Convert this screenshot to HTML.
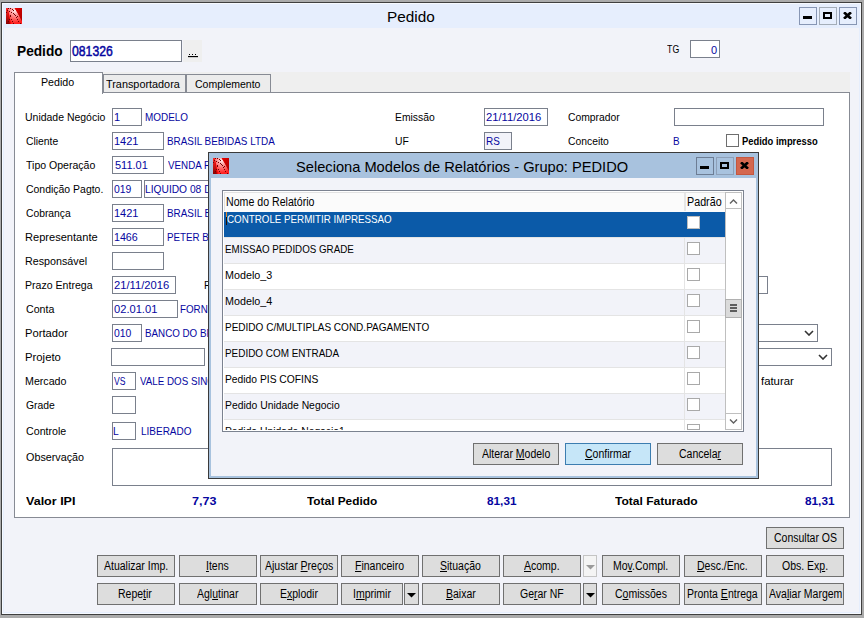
<!DOCTYPE html>
<html><head><meta charset="utf-8"><title>Pedido</title>
<style>
html,body{margin:0;padding:0;width:864px;height:618px;overflow:hidden;background:#ababab;position:relative}
u{text-decoration:underline;text-underline-offset:1px}
</style></head><body>
<div style="position:absolute;left:1px;top:2px;width:861px;height:613px;background:#e6eefd;box-shadow:inset 0 0 0 1px #3f3f3f;"></div>
<div style="position:absolute;left:2px;top:3px;width:859px;height:611px;background:transparent;box-shadow:inset 0 0 0 1px #f7faff;"></div>
<div style="position:absolute;left:4px;top:28px;width:855px;height:584px;background:#f2f3f9;"></div>
<svg style="position:absolute;left:6px;top:8px" width="16" height="16" viewBox="0 0 16 16">
<defs><radialGradient id="r6" cx="0.5" cy="0.15" r="0.8"><stop offset="0" stop-color="#fff0f0"/><stop offset="0.35" stop-color="#ff9a9a"/><stop offset="1" stop-color="#ff2020"/></radialGradient>
<linearGradient id="h6" x1="0" y1="0" x2="1" y2="1"><stop offset="0" stop-color="#e80000"/><stop offset="1" stop-color="#a80000"/></linearGradient>
<linearGradient id="l6" x1="0" y1="0" x2="0" y2="1"><stop offset="0" stop-color="#ff2a2a"/><stop offset="1" stop-color="#8a0000"/></linearGradient></defs>
<rect width="16" height="16" fill="#f00000"/>
<path d="M1.5 0H8.5C10.5 3 13 7 16 12.5V16H5C4 10 3 5 1.5 0Z" fill="url(#r6)"/>
<path d="M8.8 0H16V13.2C13.5 8.5 11 4 8.8 0Z" fill="url(#h6)"/>
<path d="M0 0H1.2C2.2 6 3 11 3.8 16H0Z" fill="url(#l6)"/>
<g fill="#700000" shape-rendering="crispEdges"><rect x="4" y="0" width="1" height="1"/><rect x="6" y="1" width="1" height="1"/><rect x="7" y="2" width="1" height="1"/><rect x="7" y="5" width="1" height="1"/><rect x="8" y="6" width="1" height="1"/><rect x="9" y="7" width="1" height="1"/><rect x="11" y="8" width="1" height="1"/><rect x="10" y="9" width="1" height="1"/><rect x="11" y="11" width="1" height="1"/><rect x="12" y="13" width="1" height="1"/><rect x="2" y="0" width="1" height="1"/><rect x="3" y="3" width="1" height="1"/><rect x="5" y="4" width="1" height="1"/><rect x="4" y="7" width="1" height="1"/><rect x="4" y="8" width="1" height="1"/><rect x="5" y="11" width="1" height="1"/><rect x="6" y="13" width="1" height="1"/><rect x="7" y="15" width="1" height="1"/><rect x="1" y="2" width="1" height="1"/><rect x="0" y="4" width="1" height="1"/><rect x="3" y="11" width="1" height="1"/><rect x="2" y="13" width="1" height="1"/><rect x="14" y="15" width="1" height="1"/></g>
</svg>
<div style="position:absolute;left:387.0px;top:9px;font-family:'Liberation Sans', sans-serif;font-size:15px;line-height:15px;font-weight:normal;color:#000;white-space:nowrap;transform-origin:0 0;transform:scaleX(1.0222);">Pedido</div>
<div style="position:absolute;left:799px;top:7px;width:18px;height:18px;background:#e6eefd;box-shadow:inset 0 0 0 1px #8796b4;"></div>
<div style="position:absolute;left:803px;top:16px;width:9px;height:3px;background:#000;"></div>
<div style="position:absolute;left:819px;top:7px;width:18px;height:18px;background:#e6eefd;box-shadow:inset 0 0 0 1px #a4adb8;"></div>
<div style="position:absolute;left:823px;top:12px;width:9px;height:7px;background:transparent;border:2px solid #000;box-sizing:border-box;"></div>
<div style="position:absolute;left:839px;top:7px;width:18px;height:18px;background:#e6eefd;box-shadow:inset 0 0 0 1px #8796b4;"></div>
<svg style="position:absolute;left:843px;top:12px" width="9" height="7" viewBox="0 0 9 7"><path d="M1 0.3L8 6.7M8 0.3L1 6.7" stroke="#000" stroke-width="2.7"/></svg>
<div style="position:absolute;left:17.0px;top:44px;font-family:'Liberation Sans', sans-serif;font-size:14px;line-height:14px;font-weight:bold;color:#000;white-space:nowrap;transform-origin:0 0;transform:scaleX(0.9778);">Pedido</div>
<div style="position:absolute;left:70px;top:40px;width:112px;height:22px;background:#fff;box-shadow:inset 0 0 0 1px #7a808c;"></div>
<div style="position:absolute;left:72.0px;top:44px;font-family:'Liberation Sans', sans-serif;font-size:14px;line-height:14px;font-weight:normal;color:#0606a0;white-space:nowrap;transform-origin:0 0;transform:scaleX(0.8723);-webkit-text-stroke:0.5px #0606a0;">081326</div>
<div style="position:absolute;left:183px;top:40px;width:19px;height:22px;background:#efefef;"></div>
<div style="position:absolute;left:189px;top:54px;width:1px;height:1px;background:#000;"></div>
<div style="position:absolute;left:192px;top:54px;width:1px;height:1px;background:#000;"></div>
<div style="position:absolute;left:195px;top:54px;width:1px;height:1px;background:#000;"></div>
<div style="position:absolute;left:188px;top:56px;width:10px;height:1px;background:#000;"></div>
<div style="position:absolute;left:188px;top:57px;width:10px;height:1px;background:#c8c8c8;"></div>
<div style="position:absolute;left:667.0px;top:44px;font-family:'Liberation Sans', sans-serif;font-size:11px;line-height:11px;font-weight:normal;color:#000;white-space:nowrap;transform-origin:0 0;transform:scaleX(0.8000);">TG</div>
<div style="position:absolute;left:690px;top:40px;width:30px;height:18px;background:#fff;box-shadow:inset 0 0 0 1px #7a808c;"></div>
<div style="position:absolute;left:711.0px;top:45px;font-family:'Liberation Sans', sans-serif;font-size:11px;line-height:11px;font-weight:normal;color:#0606a0;white-space:nowrap;transform-origin:0 0;transform:scaleX(1.0000);">0</div>
<div style="position:absolute;left:14px;top:72px;width:836px;height:21px;background:#efefef;"></div>
<div style="position:absolute;left:14px;top:92px;width:836px;height:426px;background:#fff;box-shadow:inset 0 0 0 1px #878b94;"></div>
<div style="position:absolute;left:15px;top:93px;width:834px;height:424px;background:#fff;"></div>
<div style="position:absolute;left:103px;top:74px;width:83px;height:19px;background:#ececec;box-shadow:inset 0 0 0 1px #878b94;"></div>
<div style="position:absolute;left:106.0px;top:79px;font-family:'Liberation Sans', sans-serif;font-size:11px;line-height:11px;font-weight:normal;color:#000;white-space:nowrap;transform-origin:0 0;transform:scaleX(0.9867);">Transportadora</div>
<div style="position:absolute;left:186px;top:74px;width:85px;height:19px;background:#ececec;box-shadow:inset 0 0 0 1px #878b94;"></div>
<div style="position:absolute;left:195.0px;top:79px;font-family:'Liberation Sans', sans-serif;font-size:11px;line-height:11px;font-weight:normal;color:#000;white-space:nowrap;transform-origin:0 0;transform:scaleX(0.9559);">Complemento</div>
<div style="position:absolute;left:14px;top:72px;width:89px;height:22px;background:#fff;box-shadow:inset 0 0 0 1px #878b94;"></div>
<div style="position:absolute;left:15px;top:73px;width:87px;height:22px;background:#fff;"></div>
<div style="position:absolute;left:40.5px;top:77px;font-family:'Liberation Sans', sans-serif;font-size:11px;line-height:11px;font-weight:normal;color:#000;white-space:nowrap;transform-origin:0 0;transform:scaleX(0.9697);">Pedido</div>
<div style="position:absolute;left:25.0px;top:112px;font-family:'Liberation Sans', sans-serif;font-size:11px;line-height:11px;font-weight:normal;color:#000;white-space:nowrap;transform-origin:0 0;transform:scaleX(0.9518);">Unidade Negócio</div>
<div style="position:absolute;left:112px;top:108px;width:30px;height:18px;background:#fff;box-shadow:inset 0 0 0 1px #7a808c;"></div>
<div style="position:absolute;left:114.0px;top:112px;font-family:'Liberation Sans', sans-serif;font-size:11px;line-height:11px;font-weight:normal;color:#0606a0;white-space:nowrap;transform-origin:0 0;transform:scaleX(1.0000);">1</div>
<div style="position:absolute;left:145.0px;top:112px;font-family:'Liberation Sans', sans-serif;font-size:11px;line-height:11px;font-weight:normal;color:#0606a0;white-space:nowrap;transform-origin:0 0;transform:scaleX(0.9022);">MODELO</div>
<div style="position:absolute;left:26.0px;top:136px;font-family:'Liberation Sans', sans-serif;font-size:11px;line-height:11px;font-weight:normal;color:#000;white-space:nowrap;transform-origin:0 0;transform:scaleX(0.9412);">Cliente</div>
<div style="position:absolute;left:112px;top:132px;width:52px;height:18px;background:#fff;box-shadow:inset 0 0 0 1px #7a808c;"></div>
<div style="position:absolute;left:114.0px;top:136px;font-family:'Liberation Sans', sans-serif;font-size:11px;line-height:11px;font-weight:normal;color:#0606a0;white-space:nowrap;transform-origin:0 0;transform:scaleX(1.0000);">1421</div>
<div style="position:absolute;left:167.0px;top:136px;font-family:'Liberation Sans', sans-serif;font-size:11px;line-height:11px;font-weight:normal;color:#0606a0;white-space:nowrap;transform-origin:0 0;transform:scaleX(0.8992);">BRASIL BEBIDAS LTDA</div>
<div style="position:absolute;left:26.0px;top:160px;font-family:'Liberation Sans', sans-serif;font-size:11px;line-height:11px;font-weight:normal;color:#000;white-space:nowrap;transform-origin:0 0;transform:scaleX(0.9583);">Tipo Operação</div>
<div style="position:absolute;left:112px;top:156px;width:52px;height:18px;background:#fff;box-shadow:inset 0 0 0 1px #7a808c;"></div>
<div style="position:absolute;left:115.0px;top:160px;font-family:'Liberation Sans', sans-serif;font-size:11px;line-height:11px;font-weight:normal;color:#0606a0;white-space:nowrap;transform-origin:0 0;transform:scaleX(1.0000);">511.01</div>
<div style="position:absolute;left:168.0px;top:160px;font-family:'Liberation Sans', sans-serif;font-size:11px;line-height:11px;font-weight:normal;color:#0606a0;white-space:nowrap;transform-origin:0 0;transform:scaleX(0.8900);">VENDA FORA DO ESTADO</div>
<div style="position:absolute;left:26.0px;top:184px;font-family:'Liberation Sans', sans-serif;font-size:11px;line-height:11px;font-weight:normal;color:#000;white-space:nowrap;transform-origin:0 0;transform:scaleX(0.9506);">Condição Pagto.</div>
<div style="position:absolute;left:112px;top:180px;width:30px;height:18px;background:#fff;box-shadow:inset 0 0 0 1px #7a808c;"></div>
<div style="position:absolute;left:114.0px;top:184px;font-family:'Liberation Sans', sans-serif;font-size:11px;line-height:11px;font-weight:normal;color:#0606a0;white-space:nowrap;transform-origin:0 0;transform:scaleX(0.9444);">019</div>
<div style="position:absolute;left:144px;top:180px;width:120px;height:18px;background:#fff;box-shadow:inset 0 0 0 1px #7a808c;"></div>
<div style="position:absolute;left:145.0px;top:184px;font-family:'Liberation Sans', sans-serif;font-size:11px;line-height:11px;font-weight:normal;color:#0606a0;white-space:nowrap;transform-origin:0 0;transform:scaleX(0.9300);">LIQUIDO 08 DIAS</div>
<div style="position:absolute;left:26.0px;top:208px;font-family:'Liberation Sans', sans-serif;font-size:11px;line-height:11px;font-weight:normal;color:#000;white-space:nowrap;transform-origin:0 0;transform:scaleX(0.9375);">Cobrança</div>
<div style="position:absolute;left:112px;top:204px;width:52px;height:18px;background:#fff;box-shadow:inset 0 0 0 1px #7a808c;"></div>
<div style="position:absolute;left:114.0px;top:208px;font-family:'Liberation Sans', sans-serif;font-size:11px;line-height:11px;font-weight:normal;color:#0606a0;white-space:nowrap;transform-origin:0 0;transform:scaleX(1.0000);">1421</div>
<div style="position:absolute;left:167.0px;top:208px;font-family:'Liberation Sans', sans-serif;font-size:11px;line-height:11px;font-weight:normal;color:#0606a0;white-space:nowrap;transform-origin:0 0;transform:scaleX(0.8992);">BRASIL BEBIDAS LTDA</div>
<div style="position:absolute;left:25.0px;top:232px;font-family:'Liberation Sans', sans-serif;font-size:11px;line-height:11px;font-weight:normal;color:#000;white-space:nowrap;transform-origin:0 0;transform:scaleX(1.0070);">Representante</div>
<div style="position:absolute;left:112px;top:228px;width:52px;height:18px;background:#fff;box-shadow:inset 0 0 0 1px #7a808c;"></div>
<div style="position:absolute;left:114.0px;top:232px;font-family:'Liberation Sans', sans-serif;font-size:11px;line-height:11px;font-weight:normal;color:#0606a0;white-space:nowrap;transform-origin:0 0;transform:scaleX(0.9696);">1466</div>
<div style="position:absolute;left:167.0px;top:232px;font-family:'Liberation Sans', sans-serif;font-size:11px;line-height:11px;font-weight:normal;color:#0606a0;white-space:nowrap;transform-origin:0 0;transform:scaleX(0.8900);">PETER BRASIL</div>
<div style="position:absolute;left:25.0px;top:256px;font-family:'Liberation Sans', sans-serif;font-size:11px;line-height:11px;font-weight:normal;color:#000;white-space:nowrap;transform-origin:0 0;transform:scaleX(0.9758);">Responsável</div>
<div style="position:absolute;left:112px;top:252px;width:52px;height:18px;background:#fff;box-shadow:inset 0 0 0 1px #7a808c;"></div>
<div style="position:absolute;left:25.0px;top:280px;font-family:'Liberation Sans', sans-serif;font-size:11px;line-height:11px;font-weight:normal;color:#000;white-space:nowrap;transform-origin:0 0;transform:scaleX(0.9614);">Prazo Entrega</div>
<div style="position:absolute;left:112px;top:276px;width:64px;height:18px;background:#fff;box-shadow:inset 0 0 0 1px #7a808c;"></div>
<div style="position:absolute;left:114.0px;top:280px;font-family:'Liberation Sans', sans-serif;font-size:11px;line-height:11px;font-weight:normal;color:#0606a0;white-space:nowrap;transform-origin:0 0;transform:scaleX(1.0185);">21/11/2016</div>
<div style="position:absolute;left:26.0px;top:304px;font-family:'Liberation Sans', sans-serif;font-size:11px;line-height:11px;font-weight:normal;color:#000;white-space:nowrap;transform-origin:0 0;transform:scaleX(0.9667);">Conta</div>
<div style="position:absolute;left:112px;top:300px;width:66px;height:18px;background:#fff;box-shadow:inset 0 0 0 1px #7a808c;"></div>
<div style="position:absolute;left:114.0px;top:304px;font-family:'Liberation Sans', sans-serif;font-size:11px;line-height:11px;font-weight:normal;color:#0606a0;white-space:nowrap;transform-origin:0 0;transform:scaleX(1.0116);">02.01.01</div>
<div style="position:absolute;left:180.0px;top:304px;font-family:'Liberation Sans', sans-serif;font-size:11px;line-height:11px;font-weight:normal;color:#0606a0;white-space:nowrap;transform-origin:0 0;transform:scaleX(0.8900);">FORNECEDORES</div>
<div style="position:absolute;left:25.0px;top:328px;font-family:'Liberation Sans', sans-serif;font-size:11px;line-height:11px;font-weight:normal;color:#000;white-space:nowrap;transform-origin:0 0;transform:scaleX(1.0195);">Portador</div>
<div style="position:absolute;left:112px;top:324px;width:30px;height:18px;background:#fff;box-shadow:inset 0 0 0 1px #7a808c;"></div>
<div style="position:absolute;left:114.0px;top:328px;font-family:'Liberation Sans', sans-serif;font-size:11px;line-height:11px;font-weight:normal;color:#0606a0;white-space:nowrap;transform-origin:0 0;transform:scaleX(0.9444);">010</div>
<div style="position:absolute;left:145.0px;top:328px;font-family:'Liberation Sans', sans-serif;font-size:11px;line-height:11px;font-weight:normal;color:#0606a0;white-space:nowrap;transform-origin:0 0;transform:scaleX(0.8900);">BANCO DO BRASIL</div>
<div style="position:absolute;left:25.0px;top:352px;font-family:'Liberation Sans', sans-serif;font-size:11px;line-height:11px;font-weight:normal;color:#000;white-space:nowrap;transform-origin:0 0;transform:scaleX(1.0294);">Projeto</div>
<div style="position:absolute;left:111px;top:348px;width:94px;height:18px;background:#fff;box-shadow:inset 0 0 0 1px #7a808c;"></div>
<div style="position:absolute;left:25.0px;top:376px;font-family:'Liberation Sans', sans-serif;font-size:11px;line-height:11px;font-weight:normal;color:#000;white-space:nowrap;transform-origin:0 0;transform:scaleX(0.9690);">Mercado</div>
<div style="position:absolute;left:112px;top:372px;width:24px;height:18px;background:#fff;box-shadow:inset 0 0 0 1px #7a808c;"></div>
<div style="position:absolute;left:114.0px;top:376px;font-family:'Liberation Sans', sans-serif;font-size:11px;line-height:11px;font-weight:normal;color:#0606a0;white-space:nowrap;transform-origin:0 0;transform:scaleX(0.7857);">VS</div>
<div style="position:absolute;left:140.0px;top:376px;font-family:'Liberation Sans', sans-serif;font-size:11px;line-height:11px;font-weight:normal;color:#0606a0;white-space:nowrap;transform-origin:0 0;transform:scaleX(0.8900);">VALE DOS SINOS</div>
<div style="position:absolute;left:26.0px;top:400px;font-family:'Liberation Sans', sans-serif;font-size:11px;line-height:11px;font-weight:normal;color:#000;white-space:nowrap;transform-origin:0 0;transform:scaleX(0.9419);">Grade</div>
<div style="position:absolute;left:112px;top:396px;width:24px;height:18px;background:#fff;box-shadow:inset 0 0 0 1px #7a808c;"></div>
<div style="position:absolute;left:26.0px;top:426px;font-family:'Liberation Sans', sans-serif;font-size:11px;line-height:11px;font-weight:normal;color:#000;white-space:nowrap;transform-origin:0 0;transform:scaleX(0.9690);">Controle</div>
<div style="position:absolute;left:112px;top:422px;width:24px;height:18px;background:#fff;box-shadow:inset 0 0 0 1px #7a808c;"></div>
<div style="position:absolute;left:113.0px;top:426px;font-family:'Liberation Sans', sans-serif;font-size:11px;line-height:11px;font-weight:normal;color:#0606a0;white-space:nowrap;transform-origin:0 0;transform:scaleX(0.9300);">L</div>
<div style="position:absolute;left:140.5px;top:426px;font-family:'Liberation Sans', sans-serif;font-size:11px;line-height:11px;font-weight:normal;color:#0606a0;white-space:nowrap;transform-origin:0 0;transform:scaleX(0.9074);">LIBERADO</div>
<div style="position:absolute;left:204.0px;top:280px;font-family:'Liberation Sans', sans-serif;font-size:11px;line-height:11px;font-weight:normal;color:#000;white-space:nowrap;transform-origin:0 0;transform:scaleX(0.9400);">Previsão</div>
<div style="position:absolute;left:395.0px;top:112px;font-family:'Liberation Sans', sans-serif;font-size:11px;line-height:11px;font-weight:normal;color:#000;white-space:nowrap;transform-origin:0 0;transform:scaleX(0.9400);">Emissão</div>
<div style="position:absolute;left:484px;top:108px;width:64px;height:18px;background:#fff;box-shadow:inset 0 0 0 1px #7a808c;"></div>
<div style="position:absolute;left:486.0px;top:112px;font-family:'Liberation Sans', sans-serif;font-size:11px;line-height:11px;font-weight:normal;color:#0606a0;white-space:nowrap;transform-origin:0 0;transform:scaleX(1.0185);">21/11/2016</div>
<div style="position:absolute;left:395.0px;top:136px;font-family:'Liberation Sans', sans-serif;font-size:11px;line-height:11px;font-weight:normal;color:#000;white-space:nowrap;transform-origin:0 0;transform:scaleX(0.9400);">UF</div>
<div style="position:absolute;left:484px;top:132px;width:28px;height:18px;background:#f2f3f9;box-shadow:inset 0 0 0 1px #7a808c;"></div>
<div style="position:absolute;left:486.0px;top:136px;font-family:'Liberation Sans', sans-serif;font-size:11px;line-height:11px;font-weight:normal;color:#0606a0;white-space:nowrap;transform-origin:0 0;transform:scaleX(0.9000);">RS</div>
<div style="position:absolute;left:568.0px;top:112px;font-family:'Liberation Sans', sans-serif;font-size:11px;line-height:11px;font-weight:normal;color:#000;white-space:nowrap;transform-origin:0 0;transform:scaleX(0.9400);">Comprador</div>
<div style="position:absolute;left:674px;top:108px;width:150px;height:18px;background:#fff;box-shadow:inset 0 0 0 1px #7a808c;"></div>
<div style="position:absolute;left:568.0px;top:136px;font-family:'Liberation Sans', sans-serif;font-size:11px;line-height:11px;font-weight:normal;color:#000;white-space:nowrap;transform-origin:0 0;transform:scaleX(0.9400);">Conceito</div>
<div style="position:absolute;left:673.0px;top:136px;font-family:'Liberation Sans', sans-serif;font-size:11px;line-height:11px;font-weight:normal;color:#0606a0;white-space:nowrap;transform-origin:0 0;transform:scaleX(0.9000);">B</div>
<div style="position:absolute;left:726px;top:134px;width:13px;height:13px;background:#fff;box-shadow:inset 0 0 0 1px #6e6e6e;"></div>
<div style="position:absolute;left:742.0px;top:136px;font-family:'Liberation Sans', sans-serif;font-size:11px;line-height:11px;font-weight:bold;color:#000;white-space:nowrap;transform-origin:0 0;transform:scaleX(0.8539);">Pedido impresso</div>
<div style="position:absolute;left:700px;top:276px;width:68px;height:18px;background:#fff;box-shadow:inset 0 0 0 1px #7a808c;"></div>
<div style="position:absolute;left:700px;top:324px;width:118px;height:18px;background:#fff;box-shadow:inset 0 0 0 1px #7a808c;"></div>
<svg style="position:absolute;left:804px;top:330px" width="10" height="6"><path d="M1 1L5 5L9 1" stroke="#333" stroke-width="1.6" fill="none"/></svg>
<div style="position:absolute;left:700px;top:348px;width:132px;height:18px;background:#fff;box-shadow:inset 0 0 0 1px #7a808c;"></div>
<svg style="position:absolute;left:818px;top:354px" width="10" height="6"><path d="M1 1L5 5L9 1" stroke="#333" stroke-width="1.6" fill="none"/></svg>
<div style="position:absolute;left:761.0px;top:376px;font-family:'Liberation Sans', sans-serif;font-size:11px;line-height:11px;font-weight:normal;color:#000;white-space:nowrap;transform-origin:0 0;transform:scaleX(1.0312);">faturar</div>
<div style="position:absolute;left:26.0px;top:452px;font-family:'Liberation Sans', sans-serif;font-size:11px;line-height:11px;font-weight:normal;color:#000;white-space:nowrap;transform-origin:0 0;transform:scaleX(0.9797);">Observação</div>
<div style="position:absolute;left:112px;top:448px;width:720px;height:38px;background:#fff;box-shadow:inset 0 0 0 1px #7a808c;"></div>
<div style="position:absolute;left:26.0px;top:496px;font-family:'Liberation Sans', sans-serif;font-size:11px;line-height:11px;font-weight:bold;color:#000;white-space:nowrap;transform-origin:0 0;transform:scaleX(1.1395);">Valor IPI</div>
<div style="position:absolute;left:192.0px;top:496px;font-family:'Liberation Sans', sans-serif;font-size:11px;line-height:11px;font-weight:bold;color:#0606a0;white-space:nowrap;transform-origin:0 0;transform:scaleX(1.1429);">7,73</div>
<div style="position:absolute;left:307.0px;top:496px;font-family:'Liberation Sans', sans-serif;font-size:11px;line-height:11px;font-weight:bold;color:#000;white-space:nowrap;transform-origin:0 0;transform:scaleX(1.0769);">Total Pedido</div>
<div style="position:absolute;left:487.0px;top:496px;font-family:'Liberation Sans', sans-serif;font-size:11px;line-height:11px;font-weight:bold;color:#0606a0;white-space:nowrap;transform-origin:0 0;transform:scaleX(1.0714);">81,31</div>
<div style="position:absolute;left:615.0px;top:496px;font-family:'Liberation Sans', sans-serif;font-size:11px;line-height:11px;font-weight:bold;color:#000;white-space:nowrap;transform-origin:0 0;transform:scaleX(1.0933);">Total Faturado</div>
<div style="position:absolute;left:805.0px;top:496px;font-family:'Liberation Sans', sans-serif;font-size:11px;line-height:11px;font-weight:bold;color:#0606a0;white-space:nowrap;transform-origin:0 0;transform:scaleX(1.0714);">81,31</div>
<div style="position:absolute;left:766px;top:527px;width:78px;height:22px;background:#dddddd;box-shadow:inset 0 0 0 1px #707070;"></div>
<div style="position:absolute;left:774.0px;top:532px;font-family:'Liberation Sans', sans-serif;font-size:12px;line-height:12px;font-weight:normal;color:#000;white-space:nowrap;transform-origin:0 0;transform:scaleX(0.8750);">Consultar OS</div>
<div style="position:absolute;left:97px;top:555px;width:78px;height:22px;background:#dddddd;box-shadow:inset 0 0 0 1px #707070;"></div>
<div style="position:absolute;left:104.0px;top:560px;font-family:'Liberation Sans', sans-serif;font-size:12px;line-height:12px;font-weight:normal;color:#000;white-space:nowrap;transform-origin:0 0;transform:scaleX(0.8750);">Atualizar Imp.</div>
<div style="position:absolute;left:179px;top:555px;width:78px;height:22px;background:#dddddd;box-shadow:inset 0 0 0 1px #707070;"></div>
<div style="position:absolute;left:206.0px;top:560px;font-family:'Liberation Sans', sans-serif;font-size:12px;line-height:12px;font-weight:normal;color:#000;white-space:nowrap;transform-origin:0 0;transform:scaleX(0.8750);"><u>I</u>tens</div>
<div style="position:absolute;left:260px;top:555px;width:78px;height:22px;background:#dddddd;box-shadow:inset 0 0 0 1px #707070;"></div>
<div style="position:absolute;left:265.0px;top:560px;font-family:'Liberation Sans', sans-serif;font-size:12px;line-height:12px;font-weight:normal;color:#000;white-space:nowrap;transform-origin:0 0;transform:scaleX(0.8750);">Ajustar <u>P</u>reços</div>
<div style="position:absolute;left:341px;top:555px;width:78px;height:22px;background:#dddddd;box-shadow:inset 0 0 0 1px #707070;"></div>
<div style="position:absolute;left:355.0px;top:560px;font-family:'Liberation Sans', sans-serif;font-size:12px;line-height:12px;font-weight:normal;color:#000;white-space:nowrap;transform-origin:0 0;transform:scaleX(0.8750);"><u>F</u>inanceiro</div>
<div style="position:absolute;left:422px;top:555px;width:78px;height:22px;background:#dddddd;box-shadow:inset 0 0 0 1px #707070;"></div>
<div style="position:absolute;left:440.0px;top:560px;font-family:'Liberation Sans', sans-serif;font-size:12px;line-height:12px;font-weight:normal;color:#000;white-space:nowrap;transform-origin:0 0;transform:scaleX(0.8750);"><u>S</u>ituação</div>
<div style="position:absolute;left:503px;top:555px;width:78px;height:22px;background:#dddddd;box-shadow:inset 0 0 0 1px #707070;"></div>
<div style="position:absolute;left:524.0px;top:560px;font-family:'Liberation Sans', sans-serif;font-size:12px;line-height:12px;font-weight:normal;color:#000;white-space:nowrap;transform-origin:0 0;transform:scaleX(0.8750);"><u>A</u>comp.</div>
<div style="position:absolute;left:602px;top:555px;width:78px;height:22px;background:#dddddd;box-shadow:inset 0 0 0 1px #707070;"></div>
<div style="position:absolute;left:613.0px;top:560px;font-family:'Liberation Sans', sans-serif;font-size:12px;line-height:12px;font-weight:normal;color:#000;white-space:nowrap;transform-origin:0 0;transform:scaleX(0.8750);">Mo<u>v</u>.Compl.</div>
<div style="position:absolute;left:684px;top:555px;width:78px;height:22px;background:#dddddd;box-shadow:inset 0 0 0 1px #707070;"></div>
<div style="position:absolute;left:697.0px;top:560px;font-family:'Liberation Sans', sans-serif;font-size:12px;line-height:12px;font-weight:normal;color:#000;white-space:nowrap;transform-origin:0 0;transform:scaleX(0.8750);"><u>D</u>esc./Enc.</div>
<div style="position:absolute;left:766px;top:555px;width:78px;height:22px;background:#dddddd;box-shadow:inset 0 0 0 1px #707070;"></div>
<div style="position:absolute;left:782.0px;top:560px;font-family:'Liberation Sans', sans-serif;font-size:12px;line-height:12px;font-weight:normal;color:#000;white-space:nowrap;transform-origin:0 0;transform:scaleX(0.8750);">Obs. Ex<u>p</u>.</div>
<div style="position:absolute;left:97px;top:583px;width:78px;height:22px;background:#dddddd;box-shadow:inset 0 0 0 1px #707070;"></div>
<div style="position:absolute;left:118.0px;top:588px;font-family:'Liberation Sans', sans-serif;font-size:12px;line-height:12px;font-weight:normal;color:#000;white-space:nowrap;transform-origin:0 0;transform:scaleX(0.8750);">Repe<u>t</u>ir</div>
<div style="position:absolute;left:179px;top:583px;width:78px;height:22px;background:#dddddd;box-shadow:inset 0 0 0 1px #707070;"></div>
<div style="position:absolute;left:197.0px;top:588px;font-family:'Liberation Sans', sans-serif;font-size:12px;line-height:12px;font-weight:normal;color:#000;white-space:nowrap;transform-origin:0 0;transform:scaleX(0.8750);">Agl<u>u</u>tinar</div>
<div style="position:absolute;left:260px;top:583px;width:78px;height:22px;background:#dddddd;box-shadow:inset 0 0 0 1px #707070;"></div>
<div style="position:absolute;left:280.0px;top:588px;font-family:'Liberation Sans', sans-serif;font-size:12px;line-height:12px;font-weight:normal;color:#000;white-space:nowrap;transform-origin:0 0;transform:scaleX(0.8750);">E<u>x</u>plodir</div>
<div style="position:absolute;left:422px;top:583px;width:78px;height:22px;background:#dddddd;box-shadow:inset 0 0 0 1px #707070;"></div>
<div style="position:absolute;left:446.0px;top:588px;font-family:'Liberation Sans', sans-serif;font-size:12px;line-height:12px;font-weight:normal;color:#000;white-space:nowrap;transform-origin:0 0;transform:scaleX(0.8750);"><u>B</u>aixar</div>
<div style="position:absolute;left:602px;top:583px;width:78px;height:22px;background:#dddddd;box-shadow:inset 0 0 0 1px #707070;"></div>
<div style="position:absolute;left:615.0px;top:588px;font-family:'Liberation Sans', sans-serif;font-size:12px;line-height:12px;font-weight:normal;color:#000;white-space:nowrap;transform-origin:0 0;transform:scaleX(0.8750);">C<u>o</u>missões</div>
<div style="position:absolute;left:684px;top:583px;width:78px;height:22px;background:#dddddd;box-shadow:inset 0 0 0 1px #707070;"></div>
<div style="position:absolute;left:687.0px;top:588px;font-family:'Liberation Sans', sans-serif;font-size:12px;line-height:12px;font-weight:normal;color:#000;white-space:nowrap;transform-origin:0 0;transform:scaleX(0.8750);">Pronta <u>E</u>ntrega</div>
<div style="position:absolute;left:766px;top:583px;width:78px;height:22px;background:#dddddd;box-shadow:inset 0 0 0 1px #707070;"></div>
<div style="position:absolute;left:769.0px;top:588px;font-family:'Liberation Sans', sans-serif;font-size:12px;line-height:12px;font-weight:normal;color:#000;white-space:nowrap;transform-origin:0 0;transform:scaleX(0.8750);">Ava<u>l</u>iar Margem</div>
<div style="position:absolute;left:341px;top:583px;width:62px;height:22px;background:#dddddd;box-shadow:inset 0 0 0 1px #707070;"></div>
<div style="position:absolute;left:353.0px;top:588px;font-family:'Liberation Sans', sans-serif;font-size:12px;line-height:12px;font-weight:normal;color:#000;white-space:nowrap;transform-origin:0 0;transform:scaleX(0.8750);">I<u>m</u>primir</div>
<div style="position:absolute;left:503px;top:583px;width:78px;height:22px;background:#dddddd;box-shadow:inset 0 0 0 1px #707070;"></div>
<div style="position:absolute;left:520.0px;top:588px;font-family:'Liberation Sans', sans-serif;font-size:12px;line-height:12px;font-weight:normal;color:#000;white-space:nowrap;transform-origin:0 0;transform:scaleX(0.8750);">Ge<u>r</u>ar NF</div>
<div style="position:absolute;left:583px;top:555px;width:14px;height:22px;background:#f4f4f4;box-shadow:inset 0 0 0 1px #c4c4c4;"></div>
<svg style="position:absolute;left:586px;top:565px" width="9" height="5"><path d="M0 0H9L4.5 4.5Z" fill="#9a9a9a"/></svg>
<div style="position:absolute;left:404px;top:583px;width:15px;height:22px;background:#dddddd;box-shadow:inset 0 0 0 1px #707070;"></div>
<svg style="position:absolute;left:407px;top:593px" width="9" height="5"><path d="M0 0H9L4.5 4.5Z" fill="#000"/></svg>
<div style="position:absolute;left:583px;top:583px;width:14px;height:22px;background:#dddddd;box-shadow:inset 0 0 0 1px #707070;"></div>
<svg style="position:absolute;left:586px;top:593px" width="9" height="5"><path d="M0 0H9L4.5 4.5Z" fill="#000"/></svg>
<div style="position:absolute;left:208px;top:152px;width:551px;height:327px;background:#a8c2de;box-shadow:inset 0 0 0 1px #3a3a3a;"></div>
<div style="position:absolute;left:211px;top:178px;width:545px;height:298px;background:#f2f3f9;"></div>
<svg style="position:absolute;left:213px;top:158px" width="16" height="16" viewBox="0 0 16 16">
<defs><radialGradient id="r213" cx="0.5" cy="0.15" r="0.8"><stop offset="0" stop-color="#fff0f0"/><stop offset="0.35" stop-color="#ff9a9a"/><stop offset="1" stop-color="#ff2020"/></radialGradient>
<linearGradient id="h213" x1="0" y1="0" x2="1" y2="1"><stop offset="0" stop-color="#e80000"/><stop offset="1" stop-color="#a80000"/></linearGradient>
<linearGradient id="l213" x1="0" y1="0" x2="0" y2="1"><stop offset="0" stop-color="#ff2a2a"/><stop offset="1" stop-color="#8a0000"/></linearGradient></defs>
<rect width="16" height="16" fill="#f00000"/>
<path d="M1.5 0H8.5C10.5 3 13 7 16 12.5V16H5C4 10 3 5 1.5 0Z" fill="url(#r213)"/>
<path d="M8.8 0H16V13.2C13.5 8.5 11 4 8.8 0Z" fill="url(#h213)"/>
<path d="M0 0H1.2C2.2 6 3 11 3.8 16H0Z" fill="url(#l213)"/>
<g fill="#700000" shape-rendering="crispEdges"><rect x="4" y="0" width="1" height="1"/><rect x="6" y="1" width="1" height="1"/><rect x="7" y="2" width="1" height="1"/><rect x="7" y="5" width="1" height="1"/><rect x="8" y="6" width="1" height="1"/><rect x="9" y="7" width="1" height="1"/><rect x="11" y="8" width="1" height="1"/><rect x="10" y="9" width="1" height="1"/><rect x="11" y="11" width="1" height="1"/><rect x="12" y="13" width="1" height="1"/><rect x="2" y="0" width="1" height="1"/><rect x="3" y="3" width="1" height="1"/><rect x="5" y="4" width="1" height="1"/><rect x="4" y="7" width="1" height="1"/><rect x="4" y="8" width="1" height="1"/><rect x="5" y="11" width="1" height="1"/><rect x="6" y="13" width="1" height="1"/><rect x="7" y="15" width="1" height="1"/><rect x="1" y="2" width="1" height="1"/><rect x="0" y="4" width="1" height="1"/><rect x="3" y="11" width="1" height="1"/><rect x="2" y="13" width="1" height="1"/><rect x="14" y="15" width="1" height="1"/></g>
</svg>
<div style="position:absolute;left:296.0px;top:159px;font-family:'Liberation Sans', sans-serif;font-size:15px;line-height:15px;font-weight:normal;color:#000;white-space:nowrap;transform-origin:0 0;transform:scaleX(0.9764);">Seleciona Modelos de Relatórios - Grupo: PEDIDO</div>
<div style="position:absolute;left:696px;top:157px;width:18px;height:18px;background:#a8c2de;box-shadow:inset 0 0 0 1px #6d7d94;"></div>
<div style="position:absolute;left:700px;top:166px;width:9px;height:3px;background:#000;"></div>
<div style="position:absolute;left:716px;top:157px;width:18px;height:18px;background:#a8c2de;box-shadow:inset 0 0 0 1px #8ea0b8;"></div>
<div style="position:absolute;left:720px;top:162px;width:9px;height:7px;background:transparent;border:2px solid #000;box-sizing:border-box;"></div>
<div style="position:absolute;left:736px;top:157px;width:18px;height:18px;background:#d4674f;box-shadow:inset 0 0 0 1px #c4573f;"></div>
<svg style="position:absolute;left:740px;top:162px" width="9" height="7" viewBox="0 0 9 7"><path d="M1 0.3L8 6.7M8 0.3L1 6.7" stroke="#000" stroke-width="2.7"/></svg>
<div style="position:absolute;left:222px;top:190px;width:522px;height:242px;background:#fff;box-shadow:inset 0 0 0 1px #7b8290;"></div>
<div style="position:absolute;left:224px;top:192px;width:1px;height:19px;background:#e2e2e2;"></div>
<div style="position:absolute;left:224px;top:192px;width:501px;height:20px;background:#fbfbfb;"></div>
<div style="position:absolute;left:224px;top:192px;width:501px;height:1px;background:#e2e2e2;"></div>
<div style="position:absolute;left:224px;top:192px;width:1px;height:19px;background:#e2e2e2;"></div>
<div style="position:absolute;left:226.0px;top:196px;font-family:'Liberation Sans', sans-serif;font-size:12px;line-height:12px;font-weight:normal;color:#000;white-space:nowrap;transform-origin:0 0;transform:scaleX(0.8838);">Nome do Relatório</div>
<div style="position:absolute;left:684px;top:193px;width:2px;height:18px;background:#e6e6e6;"></div>
<div style="position:absolute;left:687.0px;top:196px;font-family:'Liberation Sans', sans-serif;font-size:12px;line-height:12px;font-weight:normal;color:#000;white-space:nowrap;transform-origin:0 0;transform:scaleX(0.8947);">Padrão</div>
<div style="position:absolute;left:224px;top:212px;width:501px;height:25px;background:#0b5aa8;"></div>
<div style="position:absolute;left:227.0px;top:214px;font-family:'Liberation Sans', sans-serif;font-size:11px;line-height:11px;font-weight:normal;color:#fff;white-space:nowrap;transform-origin:0 0;transform:scaleX(0.8892);">CONTROLE PERMITIR IMPRESSAO</div>
<div style="position:absolute;left:226px;top:212px;width:1px;height:5px;background:#e08a30;"></div>
<div style="position:absolute;left:226px;top:217px;width:1px;height:8px;background:#2a1000;"></div>
<div style="position:absolute;left:687px;top:216px;width:13px;height:13px;background:#fff;box-shadow:inset 0 0 0 1px #bdbdbd;"></div>
<div style="position:absolute;left:224px;top:238px;width:501px;height:25px;background:#f2f3f9;"></div>
<div style="position:absolute;left:224px;top:263px;width:501px;height:1px;background:#e4e4e4;"></div>
<div style="position:absolute;left:684px;top:238px;width:1px;height:25px;background:#e4e4e4;"></div>
<div style="position:absolute;left:225.0px;top:244px;font-family:'Liberation Sans', sans-serif;font-size:11px;line-height:11px;font-weight:normal;color:#000;white-space:nowrap;transform-origin:0 0;transform:scaleX(0.8889);">EMISSAO PEDIDOS GRADE</div>
<div style="position:absolute;left:687px;top:242px;width:13px;height:13px;background:#fff;box-shadow:inset 0 0 0 1px #a9a9a9;"></div>
<div style="position:absolute;left:224px;top:264px;width:501px;height:25px;background:#fff;"></div>
<div style="position:absolute;left:224px;top:289px;width:501px;height:1px;background:#e4e4e4;"></div>
<div style="position:absolute;left:684px;top:264px;width:1px;height:25px;background:#e4e4e4;"></div>
<div style="position:absolute;left:225.0px;top:270px;font-family:'Liberation Sans', sans-serif;font-size:11px;line-height:11px;font-weight:normal;color:#000;white-space:nowrap;transform-origin:0 0;transform:scaleX(0.9787);">Modelo_3</div>
<div style="position:absolute;left:687px;top:268px;width:13px;height:13px;background:#fff;box-shadow:inset 0 0 0 1px #a9a9a9;"></div>
<div style="position:absolute;left:224px;top:290px;width:501px;height:25px;background:#f2f3f9;"></div>
<div style="position:absolute;left:224px;top:315px;width:501px;height:1px;background:#e4e4e4;"></div>
<div style="position:absolute;left:684px;top:290px;width:1px;height:25px;background:#e4e4e4;"></div>
<div style="position:absolute;left:225.0px;top:296px;font-family:'Liberation Sans', sans-serif;font-size:11px;line-height:11px;font-weight:normal;color:#000;white-space:nowrap;transform-origin:0 0;transform:scaleX(0.9787);">Modelo_4</div>
<div style="position:absolute;left:687px;top:294px;width:13px;height:13px;background:#fff;box-shadow:inset 0 0 0 1px #a9a9a9;"></div>
<div style="position:absolute;left:224px;top:316px;width:501px;height:25px;background:#fff;"></div>
<div style="position:absolute;left:224px;top:341px;width:501px;height:1px;background:#e4e4e4;"></div>
<div style="position:absolute;left:684px;top:316px;width:1px;height:25px;background:#e4e4e4;"></div>
<div style="position:absolute;left:225.0px;top:322px;font-family:'Liberation Sans', sans-serif;font-size:11px;line-height:11px;font-weight:normal;color:#000;white-space:nowrap;transform-origin:0 0;transform:scaleX(0.9103);">PEDIDO C/MULTIPLAS COND.PAGAMENTO</div>
<div style="position:absolute;left:687px;top:320px;width:13px;height:13px;background:#fff;box-shadow:inset 0 0 0 1px #a9a9a9;"></div>
<div style="position:absolute;left:224px;top:342px;width:501px;height:25px;background:#f2f3f9;"></div>
<div style="position:absolute;left:224px;top:367px;width:501px;height:1px;background:#e4e4e4;"></div>
<div style="position:absolute;left:684px;top:342px;width:1px;height:25px;background:#e4e4e4;"></div>
<div style="position:absolute;left:225.0px;top:348px;font-family:'Liberation Sans', sans-serif;font-size:11px;line-height:11px;font-weight:normal;color:#000;white-space:nowrap;transform-origin:0 0;transform:scaleX(0.9016);">PEDIDO COM ENTRADA</div>
<div style="position:absolute;left:687px;top:346px;width:13px;height:13px;background:#fff;box-shadow:inset 0 0 0 1px #a9a9a9;"></div>
<div style="position:absolute;left:224px;top:368px;width:501px;height:25px;background:#fff;"></div>
<div style="position:absolute;left:224px;top:393px;width:501px;height:1px;background:#e4e4e4;"></div>
<div style="position:absolute;left:684px;top:368px;width:1px;height:25px;background:#e4e4e4;"></div>
<div style="position:absolute;left:225.0px;top:374px;font-family:'Liberation Sans', sans-serif;font-size:11px;line-height:11px;font-weight:normal;color:#000;white-space:nowrap;transform-origin:0 0;transform:scaleX(0.9357);">Pedido PIS COFINS</div>
<div style="position:absolute;left:687px;top:372px;width:13px;height:13px;background:#fff;box-shadow:inset 0 0 0 1px #a9a9a9;"></div>
<div style="position:absolute;left:224px;top:394px;width:501px;height:25px;background:#f2f3f9;"></div>
<div style="position:absolute;left:224px;top:419px;width:501px;height:1px;background:#e4e4e4;"></div>
<div style="position:absolute;left:684px;top:394px;width:1px;height:25px;background:#e4e4e4;"></div>
<div style="position:absolute;left:225.0px;top:400px;font-family:'Liberation Sans', sans-serif;font-size:11px;line-height:11px;font-weight:normal;color:#000;white-space:nowrap;transform-origin:0 0;transform:scaleX(0.9421);">Pedido Unidade Negocio</div>
<div style="position:absolute;left:687px;top:398px;width:13px;height:13px;background:#fff;box-shadow:inset 0 0 0 1px #a9a9a9;"></div>
<div style="position:absolute;left:224px;top:420px;width:501px;height:10px;background:#fff;"></div>
<div style="position:absolute;left:684px;top:420px;width:1px;height:10px;background:#e4e4e4;"></div>
<div style="position:absolute;left:225.0px;top:426px;font-family:'Liberation Sans', sans-serif;font-size:11px;line-height:11px;font-weight:normal;color:#000;white-space:nowrap;transform-origin:0 0;transform:scaleX(0.9370);clip-path:inset(-6px -6px 7px -6px);">Pedido Unidade Negocio1</div>
<div style="position:absolute;left:687px;top:424px;width:13px;height:6px;background:#fff;box-shadow:inset 0 0 0 1px #a9a9a9;"></div>
<div style="position:absolute;left:224px;top:237px;width:501px;height:1px;background:#e4e4e4;"></div>
<div style="position:absolute;left:725px;top:192px;width:17px;height:238px;background:#fff;box-shadow:inset 0 0 0 1px #bfbfbf;"></div>
<div style="position:absolute;left:725px;top:192px;width:17px;height:17px;background:#fff;box-shadow:inset 0 0 0 1px #bfbfbf;"></div>
<svg style="position:absolute;left:729px;top:198px" width="9" height="7"><path d="M1 5.5L4.5 2L8 5.5" stroke="#606060" stroke-width="1.4" fill="none"/></svg>
<div style="position:absolute;left:725px;top:413px;width:17px;height:17px;background:#fff;box-shadow:inset 0 0 0 1px #bfbfbf;"></div>
<svg style="position:absolute;left:729px;top:418px" width="9" height="7"><path d="M1 1.5L4.5 5L8 1.5" stroke="#606060" stroke-width="1.4" fill="none"/></svg>
<div style="position:absolute;left:725px;top:299px;width:17px;height:19px;background:#dadada;box-shadow:inset 0 0 0 1px #b0b0b0;"></div>
<div style="position:absolute;left:730px;top:304px;width:7px;height:2px;background:#5c5c5c;"></div>
<div style="position:absolute;left:730px;top:307px;width:7px;height:2px;background:#5c5c5c;"></div>
<div style="position:absolute;left:730px;top:310px;width:7px;height:2px;background:#5c5c5c;"></div>
<div style="position:absolute;left:473px;top:443px;width:86px;height:22px;background:#dddddd;box-shadow:inset 0 0 0 1px #707070;"></div>
<div style="position:absolute;left:482.0px;top:448px;font-family:'Liberation Sans', sans-serif;font-size:12px;line-height:12px;font-weight:normal;color:#000;white-space:nowrap;transform-origin:0 0;transform:scaleX(0.8750);">Alterar <u>M</u>odelo</div>
<div style="position:absolute;left:565px;top:443px;width:86px;height:22px;background:#c6e6f8;box-shadow:inset 0 0 0 1px #3c7db0;"></div>
<div style="position:absolute;left:585.0px;top:448px;font-family:'Liberation Sans', sans-serif;font-size:12px;line-height:12px;font-weight:normal;color:#000;white-space:nowrap;transform-origin:0 0;transform:scaleX(0.8750);"><u>C</u>onfirmar</div>
<div style="position:absolute;left:657px;top:443px;width:86px;height:22px;background:#dddddd;box-shadow:inset 0 0 0 1px #707070;"></div>
<div style="position:absolute;left:679.0px;top:448px;font-family:'Liberation Sans', sans-serif;font-size:12px;line-height:12px;font-weight:normal;color:#000;white-space:nowrap;transform-origin:0 0;transform:scaleX(0.8750);">Cancela<u>r</u></div>
</body></html>
